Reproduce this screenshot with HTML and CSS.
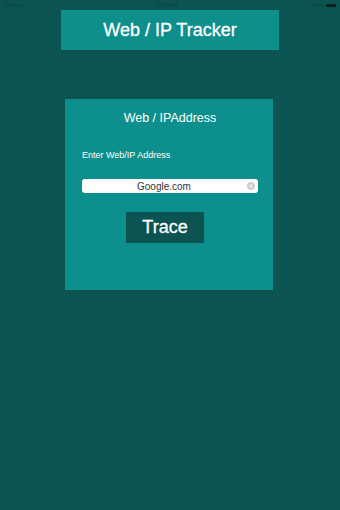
FILE: index.html
```html
<!DOCTYPE html>
<html lang="en">
<head>
  <meta charset="UTF-8">
  <title>Web / IP Tracker</title>
  <link rel="stylesheet" href="styles.css">
</head>
<body>
  <div class="statusbar">
    <span class="carrier">Carrier &#8776;</span>
    <span class="clock">10:56 AM</span>
    <span class="battery">100% <i class="batt"></i></span>
  </div>

  <header class="titlebox">Web / IP Tracker</header>

  <main class="card">
    <h2>Web / IPAddress</h2>
    <label for="host">Enter Web/IP Address</label>
    <div class="field">
      <input type="text" id="host" value="Google.com">
      <svg class="clear" viewBox="0 0 8 8" width="8" height="8">
        <circle cx="4" cy="4" r="4" fill="#cdcdcd"/>
        <path d="M2.6 2.6 L5.4 5.4 M5.4 2.6 L2.6 5.4" stroke="#ffffff" stroke-width="0.9"/>
      </svg>
    </div>
    <button type="button">Trace</button>
  </main>
</body>
</html>
```

FILE: styles.css
```css
html, body {
  margin: 0;
  padding: 0;
}

body {
  background: #0b5452;
  font-family: "Liberation Sans", Arial, sans-serif;
  width: 340px;
  height: 510px;
  overflow: hidden;
}

.statusbar {
  height: 10px;
  display: flex;
  justify-content: space-between;
  align-items: center;
  padding: 0 4px;
  font-size: 5px;
  color: #103c3a;
}

.battery {
  display: flex;
  align-items: center;
  gap: 2px;
}

.batt {
  display: inline-block;
  width: 10px;
  height: 3px;
  background: #0d1f1e;
  border-radius: 1px;
}

.titlebox {
  width: 218px;
  height: 40px;
  margin: 0 auto 0 61px;
  background: #0f8f8c;
  color: #ffffff;
  font-size: 18px;
  -webkit-text-stroke: 0.3px #ffffff;
  display: flex;
  align-items: center;
  justify-content: center;
}

.card {
  width: 208px;
  height: 191px;
  margin: 49px 0 0 65px;
  background: #0d908d;
  display: flex;
  flex-direction: column;
  box-sizing: border-box;
  padding: 12px 15px 0 17px;
}

.card h2 {
  margin: 0;
  font-size: 12.5px;
  font-weight: normal;
  color: #ffffff;
  text-align: center;
}

.card label {
  margin-top: 25px;
  font-size: 9px;
  color: #ffffff;
}

.field {
  position: relative;
  margin-top: 19px;
  height: 14px;
}

.field input {
  display: block;
  width: 100%;
  height: 14px;
  box-sizing: border-box;
  border: none;
  border-radius: 3px;
  background: #ffffff;
  padding: 0 16px 0 4px;
  font-family: "Liberation Sans", Arial, sans-serif;
  font-size: 10px;
  color: #333333;
  text-align: center;
  outline: none;
}

.clear {
  position: absolute;
  right: 3px;
  top: 3px;
}

.card button {
  align-self: flex-start;
  margin: 19px 0 0 44px;
  width: 78px;
  height: 31px;
  border: none;
  background: #0b5452;
  color: #ffffff;
  font-family: "Liberation Sans", Arial, sans-serif;
  font-size: 18px;
  -webkit-text-stroke: 0.3px #ffffff;
  padding: 0;
}
```
